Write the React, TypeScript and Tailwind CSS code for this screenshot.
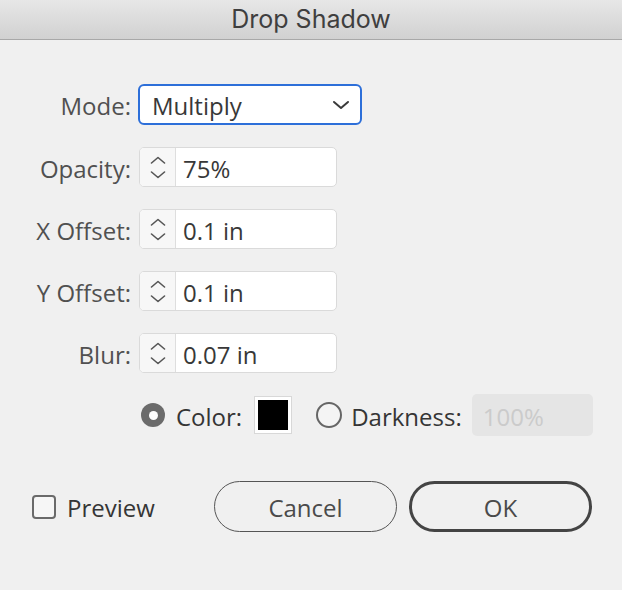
import React from "react";

const font = { fontFamily: '"Open Sans", "Noto Sans", sans-serif' };

function Spinner() {
  return (
    <div className="w-[36px] h-full bg-[#f7f7f7] border-r border-[#dedede] flex flex-col items-center justify-center gap-[7px] rounded-l-[4px]">
      <svg width="16" height="8" viewBox="0 0 16 8" fill="none">
        <path d="M1.5 7 L8 1.5 L14.5 7" stroke="#555" strokeWidth="1.6" strokeLinecap="round" strokeLinejoin="round" />
      </svg>
      <svg width="16" height="8" viewBox="0 0 16 8" fill="none">
        <path d="M1.5 1 L8 6.5 L14.5 1" stroke="#555" strokeWidth="1.6" strokeLinecap="round" strokeLinejoin="round" />
      </svg>
    </div>
  );
}

function NumRow({ label, value }: { label: string; value: string }) {
  return (
    <div className="flex items-center h-[40px] mt-[22px]">
      <div className="w-[131px] text-right text-[24px] text-[#505050] leading-none pt-[3px]">{label}</div>
      <div className="ml-[8px] w-[198px] h-[40px] bg-white border border-[#dadada] rounded-[5px] flex items-stretch">
        <Spinner />
        <div className="flex items-center pl-[7px] pt-[3px] text-[24px] text-[#383838] leading-none">{value}</div>
      </div>
    </div>
  );
}

export default function App() {
  return (
    <div className="w-[622px] h-[590px] bg-[#f0f0f0] flex flex-col overflow-hidden" style={font}>
      <div className="h-[40px] shrink-0 bg-gradient-to-b from-[#e7e7e7] to-[#d1d1d1] border-b border-[#a8a8a8] flex items-center justify-center">
        <span className="text-[25px] text-[#3f3f3f] leading-none" style={{ fontFamily: 'Inter, "Liberation Sans", sans-serif' }}>
          Drop Shadow
        </span>
      </div>
      <div className="flex flex-col pt-[44px]">
        <div className="flex items-center h-[41px]">
          <div className="w-[131px] text-right text-[24px] text-[#505050] leading-none pt-[3px]">Mode:</div>
          <div className="ml-[7px] w-[224px] h-[41px] bg-white border-2 border-[#2d6fd9] rounded-[6px] flex items-center justify-between pl-[12px] pr-[10px]">
            <span className="text-[24px] text-[#383838] leading-none pt-[3px]">Multiply</span>
            <svg width="18" height="10" viewBox="0 0 18 10" fill="none">
              <path d="M2 2 L9 8 L16 2" stroke="#3a3a3a" strokeWidth="2" strokeLinecap="round" strokeLinejoin="round" />
            </svg>
          </div>
        </div>
        <NumRow label="Opacity:" value="75%" />
        <NumRow label="X Offset:" value="0.1 in" />
        <NumRow label="Y Offset:" value="0.1 in" />
        <NumRow label="Blur:" value="0.07 in" />

        <div className="flex items-center h-[42px] mt-[21px] pl-[141px]">
          <div className="w-[24px] h-[24px] rounded-full bg-[#6b6b6b] flex items-center justify-center">
            <div className="w-[9px] h-[9px] rounded-full bg-white" />
          </div>
          <span className="ml-[11px] text-[24px] text-[#353535] leading-none pt-[3px]">Color:</span>
          <div className="ml-[12px] w-[38px] h-[38px] bg-white border border-[#d8d8d8] p-[3px]">
            <div className="w-full h-full bg-black" />
          </div>
          <div className="ml-[24px] w-[26px] h-[26px] rounded-full border-2 border-[#666] bg-[#f4f4f4]" />
          <span className="ml-[9px] text-[24px] text-[#353535] leading-none pt-[3px]">Darkness:</span>
          <div className="ml-[10px] w-[121px] h-[42px] bg-[#e5e5e5] rounded-[5px] flex items-center pl-[11px] pt-[3px] text-[24px] text-[#cbcbcb] leading-none">
            100%
          </div>
        </div>

        <div className="flex items-center h-[51px] mt-[45px] pl-[32px]">
          <div className="w-[182px] flex items-center">
            <div className="w-[24px] h-[24px] rounded-[4px] border-2 border-[#6a6a6a] bg-[#f6f6f6]" />
            <span className="ml-[11px] text-[24px] text-[#353535] leading-none pt-[3px]">Preview</span>
          </div>
          <div className="w-[183px] h-[51px] rounded-full border-[1.5px] border-[#555] flex items-center justify-center pt-[3px] text-[24px] text-[#4a4a4a] leading-none">
            Cancel
          </div>
          <div className="ml-[12px] w-[183px] h-[51px] rounded-full border-[3px] border-[#444] flex items-center justify-center pt-[3px] text-[24px] text-[#4a4a4a] leading-none">
            OK
          </div>
        </div>
      </div>
    </div>
  );
}
